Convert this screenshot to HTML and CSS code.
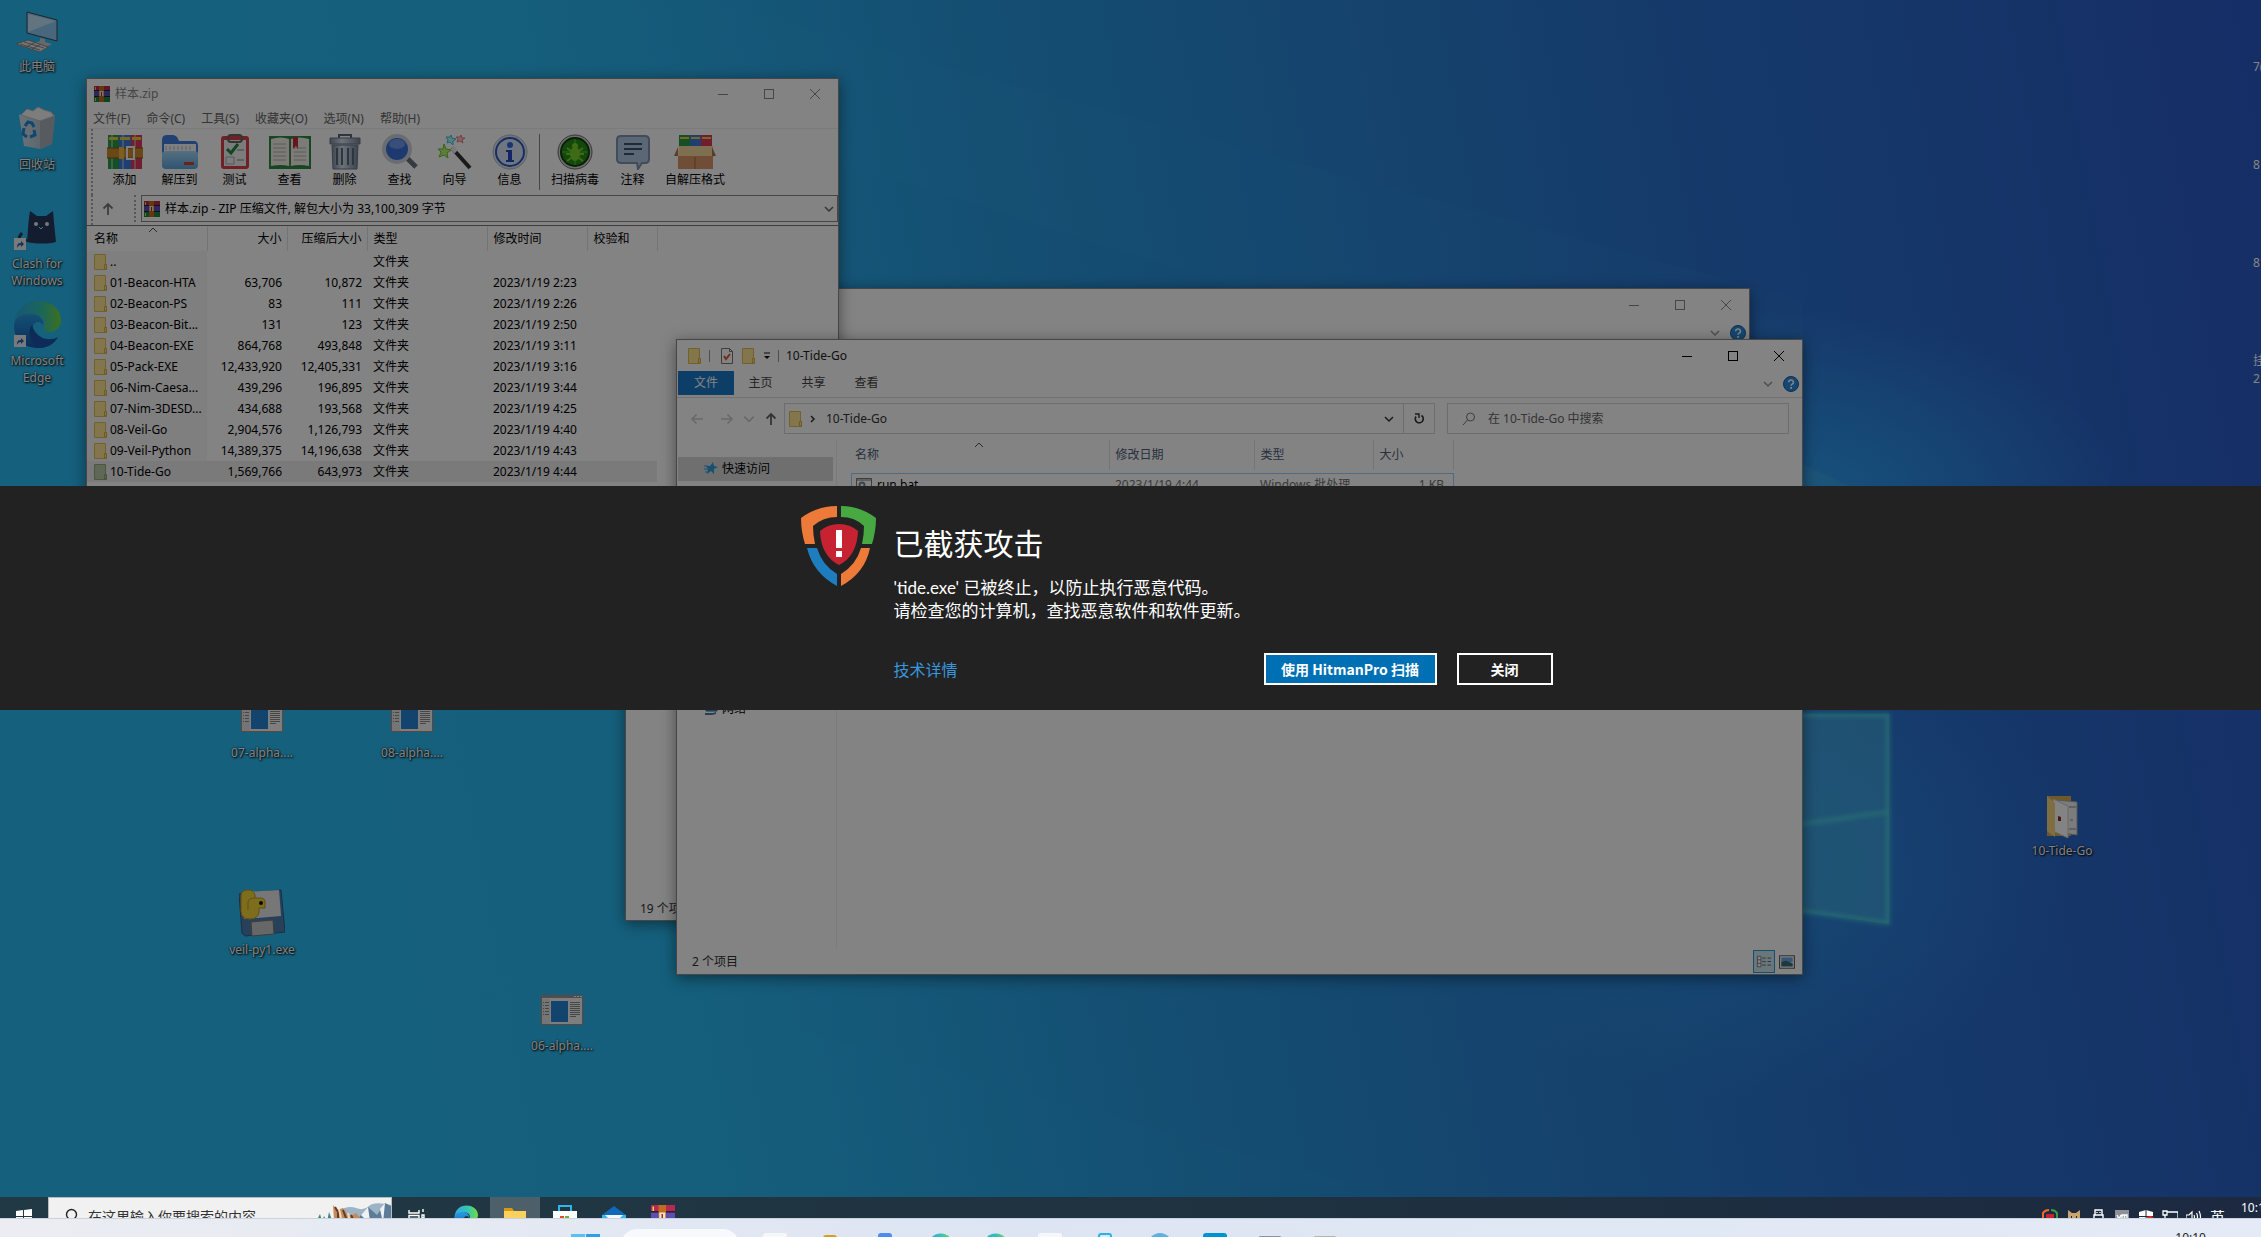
FILE: index.html
```html
<!DOCTYPE html>
<html lang="zh-CN">
<head>
    <meta charset="UTF-8">
    <meta name="viewport" content="width=device-width, initial-scale=1.0">
    <title>HitmanPro.Alert</title>
    <link rel="stylesheet" href="styles.css">
</head>
<body>

    <!-- Shared icons -->
    <svg class="sprite" aria-hidden="true">
        <symbol id="i-min" viewBox="0 0 12 12"><path d="M1 6.500h10" stroke="currentColor"/></symbol>
        <symbol id="i-max" viewBox="0 0 12 12"><rect x="1.500" y="1.500" width="9" height="9" fill="none" stroke="currentColor"/></symbol>
        <symbol id="i-close" viewBox="0 0 12 12"><path d="M1 1l10 10M11 1L1 11" stroke="currentColor"/></symbol>
        <symbol id="i-chev" viewBox="0 0 12 12"><path d="M2 4l4 4 4-4" fill="none" stroke="currentColor" stroke-width="1.500"/></symbol>
        <symbol id="i-sort" viewBox="0 0 12 6"><path d="M2 5l4-4 4 4" fill="none" stroke="currentColor"/></symbol>
        <symbol id="i-right" viewBox="0 0 12 12"><path d="M4 3l3 3-3 3" fill="none" stroke="currentColor" stroke-width="1.500"/></symbol>
        <symbol id="i-up" viewBox="0 0 14 14"><path d="M7 13V2M2.500 6.500L7 2l4.500 4.500" fill="none" stroke="currentColor" stroke-width="1.800"/></symbol>
        <symbol id="i-left" viewBox="0 0 14 14"><path d="M13 7H2M6.500 2.500L2 7l4.500 4.500" fill="none" stroke="currentColor" stroke-width="1.600"/></symbol>
        <symbol id="i-fwd" viewBox="0 0 14 14"><path d="M1 7h11M7.500 2.500L12 7l-4.500 4.500" fill="none" stroke="currentColor" stroke-width="1.600"/></symbol>
        <symbol id="i-help" viewBox="0 0 16 16">
            <circle cx="8" cy="8" r="7.500" fill="#2a8ade" stroke="#15609f"/>
            <path d="M5.600 6.200a2.400 2.200 0 1 1 3.600 1.900c-.9.5-1.100.8-1.100 1.700" fill="none" stroke="#fff" stroke-width="1.600"/>
            <rect x="7.200" y="11" width="1.800" height="1.800" fill="#fff"/>
        </symbol>
        <symbol id="i-folder" viewBox="0 0 14 16">
            <path d="M.5.500h11v10h1v5H.500z" fill="#ffe694" stroke="#e2bd53"/>
            <path d="M10.500 15v-4.500h2V15z" fill="#ffe694" stroke="#d9b13f"/>
        </symbol>
        <symbol id="i-rar" viewBox="0 0 16 16">
            <path d="M0 0h16v5H0z" fill="#b8294f"/><path d="M0 5h16v6H0z" fill="#5b4fb0"/><path d="M0 11h16v5H0z" fill="#1e8440"/>
            <path d="M0 4.500h16M0 10.500h16" stroke="#2c1c3c"/>
            <path d="M5 0h5v16H5z" fill="#c46b1f"/><path d="M5.500 5h4v5h-4z" fill="#f0e4d0"/><path d="M7 6h1v4H7z" fill="#a02c20"/>
            <path d="M1.500 1v3M1.500 12v3" stroke="#e8d25a"/>
        </symbol>
        <symbol id="i-app" viewBox="0 0 42 30">
            <path d="M.5.500h41v29H.500z" fill="#f6f6f6" stroke="#b38a7c"/>
            <path d="M1 1h40v2H1z" fill="#999"/><path d="M33 1h2v1h-2zM36 1h2v1h-2zM39 1h2v1h-2z" fill="#fff"/>
            <path d="M1 4h8v25H1z" fill="#e4e4e4"/>
            <path d="M10 6h17v21H10z" fill="#2585d4"/>
            <path d="M2 7.500h1M4 7.500h4M2 10.500h1M4 10.500h4M2 13.500h1M4 13.500h4M2 16.500h1M4 16.500h4M2 19.500h1M4 19.500h4M29 7.500h10M29 9.500h10M29 11.500h10M29 13.500h10M29 15.500h10M29 17.500h10M29 19.500h10M29 21.500h6" stroke="#888"/>
        </symbol>
        <symbol id="i-link" viewBox="0 0 12 12">
            <path d="M0 0h12v12H0z" fill="#eee"/><path d="M3 10c0-4 1-5 4-5V3l3 3-3 3V7C5 7 4 8 3 10z" fill="#2b62b8"/>
        </symbol>
        <symbol id="i-edge" viewBox="0 0 48 48">
            <path d="M1 26C1 10 12 1 25 1c14 0 23 9 23 19 0 7-5 12-11 12-5 0-8-2-6-5 2-4 0-12-9-12C12 15 2 20 1 26z" fill="url(#edgeTop)"/>
            <path d="M1 26C1 17 9 14 17 14c10 0 14 6 13 11-2-3-5-4-8-2-4 3-5 13 3 18 6 3 12 2 18-2-4 6-11 9-18 9C11 48 1 39 1 26z" fill="url(#edgeLow)"/>
            <path d="M19 25c-6 8-1 21 9 23 8-1 14-5 17-11-9 5-22 2-26-12z" fill="#1a55a8"/>
        </symbol>
        <linearGradient id="edgeTop"><stop offset="0" stop-color="#2fa8e8"/><stop offset=".55" stop-color="#33c4b6"/><stop offset="1" stop-color="#74dc3e"/></linearGradient>
        <linearGradient id="edgeLow" x2="0" y2="1"><stop offset="0" stop-color="#2a9be0"/><stop offset="1" stop-color="#1558b0"/></linearGradient>
        <linearGradient id="binBody"><stop offset="0" stop-color="#dfe5ea"/><stop offset="1" stop-color="#aab4bd"/></linearGradient>
        <linearGradient id="can"><stop offset="0" stop-color="#7c8ba0"/><stop offset=".4" stop-color="#d5deea"/><stop offset="1" stop-color="#76859b"/></linearGradient>
        <linearGradient id="openFolder" x2="0" y2="1"><stop offset="0" stop-color="#a8d8fa"/><stop offset="1" stop-color="#5ca5dc"/></linearGradient>
    </svg>

    <main class="desktop">
        <!-- Wallpaper light panes -->
        <svg class="wallpaper" viewBox="0 0 2261 1197" preserveAspectRatio="none" aria-hidden="true">
            <defs>
                <radialGradient id="glow"><stop offset="0" stop-color="#2fb4ff" stop-opacity=".75"/><stop offset="1" stop-color="#2fb4ff" stop-opacity="0"/></radialGradient>
                <filter id="soft"><feGaussianBlur stdDeviation="2"/></filter>
            </defs>
            <ellipse cx="1790" cy="500" rx="330" ry="190" fill="url(#glow)"/>
            <ellipse cx="1740" cy="860" rx="330" ry="240" fill="url(#glow)" opacity=".55"/>
            <path d="M0 1040L620 980 1400 1197H0z" fill="#35c8ff" opacity=".05"/>
            <path d="M100 0L900 180 1240 289 1802 340V300L700 0z" fill="#4ccaff" opacity=".05"/>
            <path d="M1700 415l189 90v180h-189z" fill="#4bb6e6" opacity=".3"/>
            <path d="M1700 714h189v210l-189-26z" fill="#4bb6e6" opacity=".6"/>
            <path d="M1700 715h188v208l-188-26M1700 838l188-26" fill="none" stroke="#4fe0e0" stroke-width="4" opacity=".7" filter="url(#soft)"/>
        </svg>

        <div class="shortcut pc">
            <svg width="42" height="42" viewBox="0 0 42 42">
                <path d="M11 1l30 8v21L11 22z" fill="#8fc8f2" stroke="#3c4650"/><path d="M12 3l28 7-28 11z" fill="#bfe2fa"/>
                <path d="M24 27l5 1v3l7 2-6 3-11-4 5-2z" fill="#c7ccd0"/>
                <path d="M0 33l12-4 20 7-8 5z" fill="#e6e6e6" stroke="#888"/><path d="M4 33l20 6M8 31l20 6M10 36l10-5M16 38l9-5" stroke="#888"/>
            </svg>
            <span>此电脑</span>
        </div>
        <div class="shortcut bin">
            <svg width="38" height="44" viewBox="0 0 38 44">
                <path d="M1 9l18-5 18 5-3 29-12 5-16-3z" fill="url(#binBody)" opacity=".92"/><path d="M22 14l15-5-3 29-12 5z" fill="#a9b2ba"/>
                <path d="M3 9l6-6 6 2 5-4 6 3 7 2 3 4-14 5z" fill="#f3f3f3" stroke="#b9c0c6"/>
                <path d="M7 20l3-4 4 1 2 4M16 24l1 5-5 2M9 31l-4-3 1-6" fill="none" stroke="#2389d8" stroke-width="3"/>
            </svg>
            <span>回收站</span>
        </div>
        <div class="shortcut clash">
            <svg width="48" height="44" viewBox="0 0 48 44">
                <path d="M14 35c1-10 1-19 3-31l7 5h9l7-5c1 12 2 22 3 31-8 2-20 2-29 0z" fill="#25395c"/>
                <path d="M14 33c-8 2-10-1-5-7" fill="none" stroke="#25395c" stroke-width="3"/>
                <circle cx="23" cy="17" r="2" fill="#e8eef2"/><circle cx="34" cy="17" r="2" fill="#e8eef2"/><path d="M26 20l2 2 2-2" stroke="#9fb" fill="none"/>
                <use href="#i-link" x="1" y="31" width="12" height="12"/>
            </svg>
            <span>Clash for<br>Windows</span>
        </div>
        <div class="shortcut edge">
            <svg width="48" height="48" viewBox="0 0 48 48"><use href="#i-edge"/><use href="#i-link" x="1" y="35" width="12" height="12"/></svg>
            <span>Microsoft<br>Edge</span>
        </div>
        <div class="shortcut alpha7"><svg width="42" height="30"><use href="#i-app"/></svg><span>07-alpha....</span></div>
        <div class="shortcut alpha8"><svg width="42" height="30"><use href="#i-app"/></svg><span>08-alpha....</span></div>
        <div class="shortcut alpha6"><svg width="42" height="30"><use href="#i-app"/></svg><span>06-alpha....</span></div>
        <div class="shortcut veil">
            <svg width="46" height="48" viewBox="0 0 46 48">
                <path d="M0 5l42-4 4 42-40 4-3-3z" fill="#4f7fb0" stroke="#355a86"/><path d="M5 3l35-2 2 26-37 3z" fill="#e8e8e8"/>
                <path d="M12 33l22-2 1 14-22 2z" fill="#c9c9c9" stroke="#777"/>
                <path d="M2 7Q2 1 9 1q6 0 7 5v3h5q5 0 5 4v6h-6v4q-1 7-9 7-9 0-9-8z" fill="#f3d63c" stroke="#c99518"/><path d="M9 21v-8q1-4 7-4" fill="none" stroke="#c99518"/><circle cx="22" cy="14" r="2" fill="#111"/>
            </svg>
            <span>veil-py1.exe</span>
        </div>
        <div class="shortcut tide">
            <svg width="32" height="42" viewBox="0 0 32 42">
                <path d="M1 0h24v40H1z" fill="#d9ae50"/><path d="M10 4l21 2v33l-21-3z" fill="#f2f2f2" stroke="#aaa"/><path d="M23 11h7M23 33h7M24 24h3" stroke="#888"/>
                <path d="M7 3l15 7v32L7 35z" fill="#fff" stroke="#ccc"/><path d="M1 0l8 7v34l-8-6z" fill="#f5d681"/><path d="M12 20l3 1v4h-3z" fill="#8c2d2d"/>
            </svg>
            <span>10-Tide-Go</span>
        </div>
        <div class="edge-labels"><span>7(</span><span>8</span><span>8</span><span>挂<br>2</span></div>

        <!-- Background Explorer window -->
        <section class="window window-back">
            <div class="titlebar">
                <div class="controls">
                    <button aria-label="最小化"><svg><use href="#i-min"/></svg></button>
                    <button aria-label="最大化"><svg><use href="#i-max"/></svg></button>
                    <button aria-label="关闭"><svg><use href="#i-close"/></svg></button>
                </div>
            </div>
            <div class="tabs"><div class="help"><svg class="chev"><use href="#i-chev"/></svg><svg class="q"><use href="#i-help"/></svg></div></div>
            <div class="statusbar">19 个项目</div>
        </section>

        <!-- WinRAR -->
        <section class="window window-rar">
            <div class="titlebar">
                <svg class="app-icon"><use href="#i-rar"/></svg>
                <span class="caption">样本.zip</span>
                <div class="controls">
                    <button aria-label="最小化"><svg><use href="#i-min"/></svg></button>
                    <button aria-label="最大化"><svg><use href="#i-max"/></svg></button>
                    <button aria-label="关闭"><svg><use href="#i-close"/></svg></button>
                </div>
            </div>
            <nav class="menu">
                <button>文件(F)</button><button>命令(C)</button><button>工具(S)</button><button>收藏夹(O)</button><button>选项(N)</button><button>帮助(H)</button>
            </nav>
            <div class="toolbar">
                <button>
                    <svg viewBox="0 0 36 36"><path d="M1 1h11v34H1z" fill="#2a9a48"/><path d="M12 1h12v34H12z" fill="#3d7be0"/><path d="M24 1h11v34H24z" fill="#d83a5c"/><path d="M5 1v34M16 1v34M28 1v34" stroke="#fff" opacity=".35" stroke-width="2"/><path d="M2 3h9v3H2zM13 3h10v3H13zM25 3h9v3h-9z" fill="#eccb3a"/><path d="M0 14h36v10H0z" fill="#cf8a2c"/><path d="M0 14h36M0 24h36" stroke="#8a5314"/><path d="M20 13h7v12h-7z" fill="none" stroke="#f5f5f5" stroke-width="2"/><path d="M12 13h5v12h-5z" fill="#f0b83f"/></svg>
                    <span>添加</span>
                </button>
                <button>
                    <svg viewBox="0 0 36 36"><path d="M0 6q0-5 5-5h6q4 0 6 6h15q4 0 4 5v18H0z" fill="#3f7fdc"/><path d="M2 10h32v10H2z" fill="#f5f7fa"/><path d="M4 12v4M8 12v4M12 12v4M16 12v4M20 12v4M24 12v4M28 12v4" stroke="#b3bcc8"/><path d="M0 20q0-3 4-3h28q4 0 4 3v11q0 4-4 4H4q-4 0-4-4z" fill="url(#openFolder)"/><path d="M22 28h10v3H22z" fill="#d9402b"/></svg>
                    <span>解压到</span>
                </button>
                <button>
                    <svg viewBox="0 0 36 36"><rect x="4" y="2" width="28" height="33" rx="3" fill="#d8404a"/><path d="M7 6h22v26H7z" fill="#f2f2f2"/><rect x="11" y="1" width="14" height="7" rx="3" fill="none" stroke="#666" stroke-width="2"/><path d="M10 15l4 4 7-9" fill="none" stroke="#1f8a3c" stroke-width="3"/><path d="M9 23h8v7H9z" fill="none" stroke="#aaa"/><path d="M20 16h7M20 26h7" stroke="#bbb" stroke-width="2"/></svg>
                    <span>测试</span>
                </button>
                <button>
                    <svg class="wide" viewBox="0 0 42 36"><path d="M0 2h42v33H0z" fill="#2d8a42"/><path d="M2 5q10-3 18 0v27q-8-2-18 0zM22 5q8-3 18 0v27q-10-2-18 0z" fill="#f3f0e8"/><path d="M4 10h13M4 14h13M4 18h13M4 22h13M4 26h13M25 14h12M25 18h12M25 22h12M25 26h12" stroke="#b5b0a6"/><path d="M24 3h5v12l-2-3-3 3z" fill="#c42e3a"/><path d="M21 5v28" stroke="#777"/></svg>
                    <span>查看</span>
                </button>
                <button>
                    <svg viewBox="0 0 36 36"><path d="M12 4V1h12v3" fill="none" stroke="#5c6878" stroke-width="2"/><path d="M3 4h30v6H3z" fill="url(#can)" stroke="#68778a"/><path d="M5 11h26l-1 24H6z" fill="url(#can)" stroke="#68778a"/><path d="M10 14v17M15 14v17M21 14v17M26 14v17" stroke="#59687c" stroke-width="2"/></svg>
                    <span>删除</span>
                </button>
                <button>
                    <svg viewBox="0 0 36 36"><path d="M24 23l10 10" stroke="#68717d" stroke-width="5"/><circle cx="15" cy="15" r="13" fill="#3b6fd8" stroke="#ccd3dc" stroke-width="4"/><ellipse cx="15" cy="10" rx="8" ry="5" fill="#6f9bec"/></svg>
                    <span>查找</span>
                </button>
                <button>
                    <svg viewBox="0 0 36 36"><path d="M15 14l18 20" stroke="#333" stroke-width="4"/><path d="M15 14l4 4" stroke="#eee" stroke-width="4"/><path d="M7 10l2 5 5 1-4 3 1 5-4-3-5 2 2-5-3-3h5z" fill="#b8f27c" stroke="#65c825"/><path d="M14 1l1 3 4 1-3 2v4l-3-3-3 1 1-3-2-3h4z" fill="#adf2fa" stroke="#3cc4dc"/><path d="M24 1l1 3h3l-3 2 1 3-3-2-3 1 1-3-2-2h4z" fill="#f8c0c6" stroke="#ea7c88"/></svg>
                    <span>向导</span>
                </button>
                <button>
                    <svg viewBox="0 0 36 36"><circle cx="18" cy="18" r="17" fill="#dfe6f0" stroke="#aeb9c6"/><circle cx="18" cy="18" r="14" fill="#dbe6f8" stroke="#2b5bbd" stroke-width="2"/><circle cx="18" cy="11" r="3" fill="#3366dd"/><path d="M14 16h6v10h2v2h-8v-2h2v-8h-2z" fill="#2546c8"/></svg>
                    <span>信息</span>
                </button>
                <i class="rule"></i>
                <button class="w70">
                    <svg viewBox="0 0 36 36"><circle cx="18" cy="18" r="17" fill="#d6d6d6" stroke="#666"/><circle cx="18" cy="18" r="14" fill="#258d17" stroke="#123f0c" stroke-width="2"/><path d="M18 5v26M5 18h26" stroke="#58c93c"/><ellipse cx="18" cy="20" rx="5" ry="7" fill="#7cd02e"/><circle cx="18" cy="12" r="3" fill="#7cd02e"/><path d="M10 14l4 3M9 20h4M10 27l4-3M26 14l-4 3M27 20h-4M26 27l-4-3" stroke="#7cd02e" stroke-width="2"/></svg>
                    <span>扫描病毒</span>
                </button>
                <button class="w45">
                    <svg viewBox="0 0 36 36"><path d="M6 2h24q4 0 4 4v19q0 4-4 4h-3l-4 6-1-6H6q-4 0-4-4V6q0-4 4-4z" fill="#b4c8e4" stroke="#7f93b0" stroke-width="2"/><path d="M9 10h18M9 15h18M9 20h10" stroke="#3d5270" stroke-width="2"/></svg>
                    <span>注释</span>
                </button>
                <button class="w80">
                    <svg class="wide" viewBox="0 0 42 36"><path d="M5 1h11v13H5z" fill="#2a9a48"/><path d="M16 1h11v13H16z" fill="#3d7be0"/><path d="M27 1h11v13H27z" fill="#d83a5c"/><path d="M6 3h9v2H6zM17 3h9v2h-9zM28 3h9v2h-9z" fill="#eccb3a"/><path d="M5 12h34l1 11H4z" fill="#f4d99a"/><path d="M4 13l-4 9h4zM38 13l4 9h-4z" fill="#b8734a"/><path d="M4 22h35v13H4z" fill="#d9976b"/><path d="M21 23v12" stroke="#a5663e"/></svg>
                    <span>自解压格式</span>
                </button>
            </div>
            <div class="pathbar">
                <button class="up" aria-label="上一级"><svg><use href="#i-up"/></svg></button>
                <div class="combo">
                    <svg class="app-icon"><use href="#i-rar"/></svg>
                    <select aria-label="路径"><option>样本.zip - ZIP 压缩文件, 解包大小为 33,100,309 字节</option></select>
                    <svg class="chev"><use href="#i-chev"/></svg>
                </div>
            </div>
            <div class="list">
                <table class="archive">
                    <thead>
                        <tr><th class="c-name">名称<svg class="sort"><use href="#i-sort"/></svg></th><th class="c-size num">大小</th><th class="c-size num">压缩后大小</th><th class="c-type">类型</th><th class="c-date">修改时间</th><th class="c-sum">校验和</th></tr>
                    </thead>
                    <tbody>
                        <tr><td><svg><use href="#i-folder"/></svg>..</td><td></td><td></td><td>文件夹</td><td></td><td></td></tr>
                        <tr><td><svg><use href="#i-folder"/></svg>01-Beacon-HTA</td><td>63,706</td><td>10,872</td><td>文件夹</td><td>2023/1/19 2:23</td><td></td></tr>
                        <tr><td><svg><use href="#i-folder"/></svg>02-Beacon-PS</td><td>83</td><td>111</td><td>文件夹</td><td>2023/1/19 2:26</td><td></td></tr>
                        <tr><td><svg><use href="#i-folder"/></svg>03-Beacon-Bit...</td><td>131</td><td>123</td><td>文件夹</td><td>2023/1/19 2:50</td><td></td></tr>
                        <tr><td><svg><use href="#i-folder"/></svg>04-Beacon-EXE</td><td>864,768</td><td>493,848</td><td>文件夹</td><td>2023/1/19 3:11</td><td></td></tr>
                        <tr><td><svg><use href="#i-folder"/></svg>05-Pack-EXE</td><td>12,433,920</td><td>12,405,331</td><td>文件夹</td><td>2023/1/19 3:16</td><td></td></tr>
                        <tr><td><svg><use href="#i-folder"/></svg>06-Nim-Caesa...</td><td>439,296</td><td>196,895</td><td>文件夹</td><td>2023/1/19 3:44</td><td></td></tr>
                        <tr><td><svg><use href="#i-folder"/></svg>07-Nim-3DESD...</td><td>434,688</td><td>193,568</td><td>文件夹</td><td>2023/1/19 4:25</td><td></td></tr>
                        <tr><td><svg><use href="#i-folder"/></svg>08-Veil-Go</td><td>2,904,576</td><td>1,126,793</td><td>文件夹</td><td>2023/1/19 4:40</td><td></td></tr>
                        <tr><td><svg><use href="#i-folder"/></svg>09-Veil-Python</td><td>14,389,375</td><td>14,196,638</td><td>文件夹</td><td>2023/1/19 4:43</td><td></td></tr>
                        <tr class="selected"><td><svg><use href="#i-folder"/></svg>10-Tide-Go</td><td>1,569,766</td><td>643,973</td><td>文件夹</td><td>2023/1/19 4:44</td><td></td></tr>
                    </tbody>
                </table>
            </div>
        </section>

        <!-- Active Explorer window -->
        <section class="window window-front">
            <div class="titlebar">
                <svg class="folder"><use href="#i-folder"/></svg>
                <i class="tick"></i>
                <svg class="doc" viewBox="0 0 12 16"><path d="M.5.500h8l3 3v12H.500z" fill="#fff" stroke="#777"/><path d="M8.500.500v3h3" fill="none" stroke="#777"/><path d="M3 8l2 3 4-5" fill="none" stroke="#e2562a" stroke-width="2"/></svg>
                <svg class="folder"><use href="#i-folder"/></svg>
                <svg class="more" viewBox="0 0 8 8"><path d="M1 1h6" stroke="#111"/><path d="M1 4h6L4 7z" fill="#111"/></svg>
                <i class="tick"></i>
                <span class="caption">10-Tide-Go</span>
                <div class="controls">
                    <button aria-label="最小化"><svg><use href="#i-min"/></svg></button>
                    <button aria-label="最大化"><svg><use href="#i-max"/></svg></button>
                    <button aria-label="关闭"><svg><use href="#i-close"/></svg></button>
                </div>
            </div>
            <div class="tabs">
                <button class="active">文件</button><button>主页</button><button>共享</button><button>查看</button>
                <div class="help"><svg class="chev"><use href="#i-chev"/></svg><svg class="q"><use href="#i-help"/></svg></div>
            </div>
            <div class="navbar">
                <div class="arrows">
                    <button aria-label="后退" disabled><svg><use href="#i-left"/></svg></button>
                    <button aria-label="前进" disabled><svg><use href="#i-fwd"/></svg></button>
                    <button class="recent" aria-label="最近" disabled><svg><use href="#i-chev"/></svg></button>
                    <button aria-label="向上"><svg><use href="#i-up"/></svg></button>
                </div>
                <div class="address">
                    <svg class="folder"><use href="#i-folder"/></svg>
                    <svg class="crumb"><use href="#i-right"/></svg>
                    <input type="text" value="10-Tide-Go" aria-label="地址">
                    <svg class="chev"><use href="#i-chev"/></svg>
                    <button aria-label="刷新"><svg viewBox="0 0 12 12"><path d="M8.500 2.500A4 4 0 1 1 3 3.500" fill="none" stroke="currentColor" stroke-width="1.600"/><path d="M2 1h4v4" fill="none" stroke="currentColor" stroke-width="1.400"/></svg></button>
                </div>
                <label class="search">
                    <svg viewBox="0 0 14 14"><circle cx="8.500" cy="5" r="4" fill="none" stroke="#777"/><path d="M5.500 8L1 13" stroke="#777"/></svg>
                    <input type="text" placeholder="在 10-Tide-Go 中搜索" aria-label="搜索">
                </label>
            </div>
            <div class="content">
                <aside>
                    <a class="quick" href="#"><svg viewBox="0 0 14 14"><path d="M9 0l1 4 4 1-4 2v5L7 9l-4 3 1-5-2-3 4 0z" fill="#2f9de0"/><path d="M0 4h4M0 7h4M1 10h3" stroke="#2f9de0"/></svg>快速访问</a>
                    <a class="network" href="#"><svg viewBox="0 0 14 14"><path d="M2 1h11v8H2z" fill="#4aa3e0" stroke="#26679c"/><path d="M1 11h8l3-1v2l-4 1H1z" fill="#4d7d9c"/></svg>网络</a>
                </aside>
                <div class="files">
                    <table>
                        <thead>
                            <tr><th class="f-name">名称<svg class="sort"><use href="#i-sort"/></svg></th><th class="f-date">修改日期</th><th class="f-type">类型</th><th class="f-size">大小</th></tr>
                        </thead>
                        <tbody>
                            <tr><td><svg viewBox="0 0 16 16"><path d="M.5 1.500h15v14H.500z" fill="#fff" stroke="#777"/><path d="M1 3h14" stroke="#777"/><circle cx="6" cy="8" r="2.500" fill="none" stroke="#6c8493" stroke-width="2"/><circle cx="10" cy="12" r="2" fill="none" stroke="#6c8493" stroke-width="2"/></svg>run.bat</td><td>2023/1/19 4:44</td><td>Windows 批处理...</td><td class="num">1 KB</td></tr>
                        </tbody>
                    </table>
                </div>
            </div>
            <div class="statusbar">
                <span>2 个项目</span>
                <div class="views">
                    <button class="on" aria-label="详细信息"><svg viewBox="0 0 18 16"><path d="M1.500 1.500h4v12h-4zM1.500 5.500h4M1.500 9.500h4" fill="#fff" stroke="#777"/><path d="M7 3.500h4M13 3.500h4M7 7.500h4M13 7.500h4M7 11.500h4M13 11.500h4" stroke="#555"/></svg></button>
                    <button aria-label="大图标"><svg viewBox="0 0 14 12"><path d="M.5.500h13v11H.500z" fill="#fff" stroke="#666"/><path d="M2 2h10v4H2z" fill="#6ea7ea"/><path d="M2 6l4-1 6 2v3H2z" fill="#3c6f78"/></svg></button>
                </div>
            </div>
        </section>

        <div class="shade"></div>

        <!-- Alert banner -->
        <section class="alert" role="alertdialog" aria-labelledby="alert-title">
            <div class="alert-inner">
                <svg class="shield" viewBox="0 0 75 80">
                    <path d="M36 0v11Q22 11 12 20q0 9 2 18H4Q0 25 0 12 16 0 36 0z" fill="#ee7a3a"/>
                    <path d="M40 0v11q14 0 23 9 0 9-2 18h10q4-13 4-26Q59 0 40 0z" fill="#48a942"/>
                    <path d="M6 42h10q5 17 20 26v12Q12 67 6 42z" fill="#1d7dbf"/>
                    <path d="M69 42H60q-5 17-20 26v12q24-13 29-38z" fill="#ee7a3a"/>
                    <path d="M38 18q11 0 19 7-1 25-19 34-18-9-19-34 8-7 19-7z" fill="#c62232"/>
                    <path d="M35 24h6v18h-6zM35 45h6v6h-6z" fill="#fff"/>
                </svg>
                <div class="alert-body">
                    <h1 id="alert-title">已截获攻击</h1>
                    <p>'tide.exe' 已被终止，以防止执行恶意代码。<br>请检查您的计算机，查找恶意软件和软件更新。</p>
                    <div class="actions">
                        <a href="#">技术详情</a>
                        <button class="primary">使用 HitmanPro 扫描</button>
                        <button>关闭</button>
                    </div>
                </div>
            </div>
        </section>
    </main>

    <!-- Guest taskbar -->
    <footer class="taskbar">
        <div class="taskbar-row">
            <button class="start" aria-label="开始"><svg width="16" height="16" viewBox="0 0 16 16"><path d="M0 2l7-1v6H0zM8 1l8-1v7H8zM0 8h7v6l-7-1zM8 8h8v8l-8-1z" fill="#fff"/></svg></button>
            <label class="task-search">
                <svg width="14" height="18" viewBox="0 0 14 18"><circle cx="7.500" cy="6.500" r="5" fill="none" stroke="#222" stroke-width="1.400"/><path d="M4 11l-3 5" stroke="#222" stroke-width="1.400"/></svg>
                <input type="text" placeholder="在这里输入你要搜索的内容" aria-label="搜索">
                <svg class="art" width="73" height="32" viewBox="0 0 73 32">
                    <path d="M20 10q10-6 18-3t13-2 22-1v28H20z" fill="#9db4c6"/><path d="M36 22l14-16 9 8 8-12 6 3v27H36z" fill="#5d7c98"/><path d="M43 14l7-8 2 14-5-2zM62 8l5-6-2 20z" fill="#eef2f5"/>
                    <path d="M0 17l2-4 2 7 2-5 3 6 2-10 3 8v13H0z" fill="#3e8479"/><path d="M15 4l4 5 6-2 6 9 7-4 5 6v14H17z" fill="#c48a5c"/><path d="M17 6l3 5v21M25 9l3 8v15M33 14l3 6v12" stroke="#633c27" stroke-width="2" fill="none"/><path d="M21 8l2 9M30 12l2 9" stroke="#f0d5b7" stroke-width="2"/>
                </svg>
            </label>
            <button class="app" aria-label="任务视图"><svg width="18" height="18" viewBox="0 0 18 18"><path d="M1 2v3h10V2M1 16v-3h10v3M1 7.500h10v3H1zM15 1v3M15 12v4M14 7h2v3h-2z" fill="none" stroke="#fff" stroke-width="1.400"/></svg></button>
            <button class="app" aria-label="Edge"><svg width="24" height="24"><use href="#i-edge"/></svg></button>
            <button class="app open" aria-label="文件资源管理器"><svg width="22" height="18" viewBox="0 0 22 18"><path d="M0 0h8l2 3H0z" fill="#d69a12"/><path d="M0 3h22v15H0z" fill="#fbd05c"/><path d="M4 12h14v6H4z" fill="#e7aa2b"/></svg></button>
            <button class="app" aria-label="应用商店"><svg width="24" height="24" viewBox="0 0 24 24"><path d="M6 8V1h12v7" fill="none" stroke="#2ab7ee" stroke-width="2"/><path d="M0 6h24v16H0z" fill="#fff"/><path d="M7 11h4v4H7z" fill="#e34b2f"/><path d="M12 11h4v4h-4z" fill="#6fb52c"/><path d="M7 16h4v4H7z" fill="#2a9fe8"/><path d="M12 16h4v4h-4z" fill="#f8ba2a"/></svg></button>
            <button class="app" aria-label="邮件"><svg width="24" height="24" viewBox="0 0 24 24"><path d="M0 10l12-9 12 9v12H0z" fill="#0f69b8"/><path d="M0 10h24v12H0z" fill="#34b5ee"/><path d="M3 10h18l-9 9z" fill="#f4f8fb"/></svg></button>
            <button class="app" aria-label="WinRAR"><svg width="24" height="24"><use href="#i-rar"/></svg></button>

            <div class="tray">
                <svg viewBox="0 0 16 16"><path d="M7 1Q3 1 1 4v5" fill="none" stroke="#ee6a2a" stroke-width="2"/><path d="M9 1q4 0 6 3v5" fill="none" stroke="#3a9d3c" stroke-width="2"/><path d="M4 5h8v5q-1 3-4 5-3-2-4-5z" fill="#c62232"/></svg>
                <svg viewBox="0 0 16 16"><path d="M2 1l4 3h4l4-3v14H2z" fill="#c9a571"/><path d="M5 7h1v2H5zM10 7h1v2h-1z" fill="#222"/></svg>
                <svg viewBox="0 0 16 16"><path d="M5 1h7v5H5zM4 6h9v9H4zM7 3v1M10 3v1" fill="none" stroke="#fff" stroke-width="1.400"/></svg>
                <svg viewBox="0 0 16 16"><path d="M1 1h14v14H1z" fill="#8d9298"/><path d="M3 6l2 4 2-4M8 10V6h5v4M10.500 6v4" fill="none" stroke="#fff" stroke-width="1.400"/></svg>
                <svg viewBox="0 0 16 16"><path d="M8 1l7 2v5q-1 4-7 7-6-3-7-7V3z" fill="#fff"/><path d="M8 1v14M1 7.500h14" stroke="#1d2b3f"/><circle cx="12" cy="11" r="4" fill="#d82b2b"/></svg>
                <svg viewBox="0 0 16 16"><path d="M1 2h4v4H1zM5 3h11v8H5M3 6v6h6" fill="none" stroke="#fff" stroke-width="1.300"/></svg>
                <svg viewBox="0 0 16 16"><path d="M0 6h3l3-3v10l-3-3H0zM8 6q1 2 0 4M10.500 4q2 4 0 8M13 2q3 6 0 12" fill="none" stroke="#fff" stroke-width="1.200"/></svg>
                <span class="ime">英</span>
                <span class="clock">10:1</span>
            </div>
        </div>
    </footer>

    <!-- Host taskbar -->
    <footer class="hostbar">
        <div class="host-row">
            <span class="h-start"></span>
            <span class="h-search"></span>
            <span class="h-icons">
                <i class="white"></i><i class="gold"></i><i class="blue"></i>
                <svg><use href="#i-edge"/></svg><svg><use href="#i-edge"/></svg>
                <i class="white"></i><i class="store"></i><i class="round"></i><i class="azure"></i><i class="grey"></i><i class="sand"></i>
            </span>
            <span class="h-clock">10:10</span>
        </div>
    </footer>

</body>
</html>
```
FILE: styles.css
```css
* {
    box-sizing: border-box;
}

body {
    margin: 0;
    height: 100vh;
    display: flex;
    flex-direction: column;
    overflow: hidden;
    font-family: "Noto Sans", "Noto Sans CJK SC", sans-serif;
    font-size: 12px;
    line-height: 16px;
    color: #222;
}

button,
input,
select {
    font: inherit;
    color: inherit;
    background: none;
    border: 0;
    padding: 0;
    margin: 0;
    outline: 0;
}

svg {
    display: block;
    flex: none;
}

a {
    color: inherit;
    text-decoration: none;
}

.sprite {
    position: absolute;
    width: 0;
    height: 0;
}

/* Desktop */
.desktop {
    position: relative;
    flex: 1;
    overflow: hidden;
    background: linear-gradient(80deg, #29bcf4 0%, #29baf2 28%, #2896dc 50%, #2a74d0 74%, #2b5ac8 100%);
}

.wallpaper {
    position: absolute;
    width: 100%;
    height: 100%;
}

.shade {
    position: absolute;
    inset: 0;
    background: rgba(0, 0, 0, 0.486);
}

.shortcut {
    position: absolute;
    width: 72px;
    display: flex;
    flex-direction: column;
    align-items: center;
    gap: 8px;
    color: #fff;
    text-align: center;
    line-height: 17px;
    white-space: nowrap;
    text-shadow: 1px 1px 2px #000, 0 0 2px #000;
}

.pc { left: 1px; top: 11px; gap: 5px; }
.bin { left: 1px; top: 106px; gap: 6px; }
.clash { left: 1px; top: 207px; gap: 4px; }
.edge { left: 1px; top: 300px; gap: 4px; }
.alpha7 { left: 226px; top: 702px; gap: 12px; }
.alpha8 { left: 376px; top: 702px; gap: 12px; }
.alpha6 { left: 526px; top: 995px; gap: 12px; }
.veil { left: 226px; top: 889px; gap: 4px; }
.tide { left: 2026px; top: 796px; gap: 4px; }

.edge-labels {
    position: absolute;
    right: -4px;
    top: 58px;
    display: grid;
    grid-auto-rows: 98px;
    width: 12px;
    color: #fff;
    line-height: 18px;
    white-space: nowrap;
}

/* Windows */
.window {
    position: absolute;
    display: flex;
    flex-direction: column;
    background: #fff;
    border: 1px solid #888;
    box-shadow: 0 3px 14px rgba(0, 0, 0, 0.45);
}

.window-back {
    left: 625px;
    top: 288px;
    width: 1125px;
    height: 633px;
    color: #888;
}

.window-rar {
    left: 86px;
    top: 78px;
    width: 753px;
    height: 560px;
}

.window-front {
    left: 676px;
    top: 339px;
    width: 1127px;
    height: 636px;
}

.titlebar {
    display: flex;
    align-items: center;
    height: 31px;
    padding-left: 7px;
}

.controls {
    display: flex;
    margin-left: auto;
    color: #000;
}

.controls button {
    width: 46px;
    height: 28px;
    display: grid;
    place-items: center;
}

.controls svg,
.chev,
.crumb {
    width: 12px;
    height: 12px;
}

.window-back .controls,
.window-rar .controls {
    color: #888;
}

.app-icon {
    width: 16px;
    height: 16px;
}

.folder {
    width: 14px;
    height: 16px;
}

.window-rar .titlebar {
    height: 30px;
}

.window-rar .caption {
    margin-left: 5px;
    color: #888;
}

/* WinRAR */
.menu {
    display: flex;
    gap: 16px;
    height: 20px;
    padding-left: 6px;
    color: #666;
    border-bottom: 1px solid #f0f0f0;
}

.toolbar {
    display: flex;
    height: 66px;
    margin-left: 4px;
    padding: 5px 0 0 4px;
    border-left: 2px dotted #aaa;
}

.toolbar button {
    width: 55px;
    display: flex;
    flex-direction: column;
    align-items: center;
    gap: 2px;
    color: #000;
}

.toolbar svg {
    width: 36px;
    height: 36px;
}

.toolbar svg.wide {
    width: 42px;
}

.rule {
    width: 1px;
    height: 56px;
    margin-left: 2px;
    background: #888;
}

.toolbar .w70 { width: 70px; }
.toolbar .w45 { width: 45px; }
.toolbar .w80 { width: 80px; }

.pathbar {
    display: flex;
    height: 30px;
    margin-left: 4px;
    padding-bottom: 3px;
    border-left: 2px dotted #aaa;
    color: #000;
}

.up {
    width: 43px;
    padding-left: 8px;
    border-right: 2px dotted #aaa;
    color: #777;
}

.up svg {
    width: 14px;
    height: 14px;
}

.combo {
    flex: 1;
    display: flex;
    align-items: center;
    gap: 5px;
    margin-left: 5px;
    padding: 0 2px;
    border: 1px solid #888;
}

.combo select {
    flex: 1;
    appearance: none;
}

.combo .chev {
    color: #666;
}

.list {
    flex: 1;
    border-top: 1px solid #777;
    color: #000;
}

table {
    border-collapse: collapse;
    table-layout: fixed;
}

th {
    position: relative;
    font-weight: normal;
    text-align: left;
}

.sort {
    position: absolute;
    left: 50%;
    top: 1px;
    width: 12px;
    height: 6px;
    color: #555;
}

.archive {
    width: 570px;
}

.archive th {
    height: 25px;
    padding: 0 5px 0 6px;
    border-right: 1px solid #e2e2e2;
}

.archive td {
    height: 21px;
    padding: 0 5px 0 6px;
    white-space: nowrap;
}

.archive th:first-child,
.archive td:first-child {
    padding-left: 7px;
}

.archive td:first-child {
    display: flex;
    align-items: center;
    gap: 2px;
    background: #f7f7f7;
    padding-right: 0;
}

.archive td svg {
    width: 14px;
    height: 16px;
}

.archive td:nth-child(2),
.archive td:nth-child(3),
.num,
.archive th.num {
    text-align: right;
}

.c-name { width: 120px; }
.c-size { width: 80px; }
.c-type { width: 120px; }
.c-date { width: 100px; }
.c-sum { width: 70px; }

.archive .selected,
.archive .selected td:first-child {
    background: #eee;
}

.selected svg {
    filter: hue-rotate(35deg) saturate(0.4) brightness(0.85);
}

/* Explorer */
.window-front .titlebar {
    padding-left: 11px;
    gap: 7px;
}

.tick {
    width: 1px;
    height: 12px;
    background: #999;
}

.doc {
    width: 12px;
    height: 16px;
    margin-left: 4px;
    margin-right: 2px;
}

.more {
    width: 8px;
    height: 8px;
}

.tabs {
    display: flex;
    height: 27px;
    border-bottom: 1px solid #dcdcdc;
}

.window-back .tabs {
    border-color: transparent;
}

.tabs button {
    width: 53px;
    height: 24px;
    color: #444;
}

.tabs .active {
    width: 56px;
    margin-left: 1px;
    background: #1979ca;
    color: #fff;
}

.help {
    display: flex;
    align-items: center;
    gap: 9px;
    margin-left: auto;
    padding-right: 3px;
    color: #999;
}

.q {
    width: 16px;
    height: 16px;
}

.navbar {
    display: flex;
    gap: 12px;
    height: 42px;
    padding: 5px 13px 6px 13px;
}

.arrows {
    display: flex;
    align-items: center;
    gap: 16px;
    width: 82px;
    color: #666;
}

.arrows svg {
    width: 14px;
    height: 14px;
}

.arrows :disabled {
    color: #ccc;
}

.arrows .recent {
    margin: 0 -8px;
}

.address,
.search {
    display: flex;
    align-items: center;
    border: 1px solid #d5d5d5;
}

.address {
    flex: 1;
    padding-left: 4px;
    color: #333;
}

.address .crumb {
    margin: 0 7px 0 4px;
}

.address input {
    flex: 1;
    min-width: 0;
}

.address button {
    width: 31px;
    height: 100%;
    margin-left: 8px;
    display: grid;
    place-items: center;
    border-left: 1px solid #d5d5d5;
}

.address button svg {
    width: 12px;
    height: 12px;
}

.search {
    width: 342px;
    padding-left: 14px;
    gap: 12px;
}

.search svg {
    width: 14px;
    height: 14px;
}

.search input {
    flex: 1;
}

.search ::placeholder {
    color: #666;
    opacity: 1;
}

.content {
    flex: 1;
    display: flex;
}

aside {
    display: flex;
    flex-direction: column;
    width: 160px;
    padding: 17px 3px 0 1px;
    border-right: 1px solid #f0f0f0;
    color: #000;
}

aside a {
    display: flex;
    align-items: center;
    gap: 4px;
    height: 24px;
    padding-left: 26px;
}

aside svg {
    width: 14px;
    height: 14px;
}

.quick {
    background: #d9d9d9;
}

.network {
    margin-top: 216px;
}

.files {
    padding-left: 15px;
}

.files table {
    width: 601px;
}

.files th {
    height: 30px;
    padding-left: 6px;
    border-right: 1px solid #e4e4e4;
    color: #4c607a;
}

.files th:first-child {
    padding-left: 3px;
}

.files .sort {
    left: 121px;
    top: 2px;
}

.files tbody::before {
    content: "";
    display: block;
    height: 4px;
}

.files tbody tr {
    outline: 1px solid #99d1ff;
}

.files td {
    height: 22px;
    padding: 0 9px 0 6px;
    white-space: nowrap;
    color: #6d6d6d;
}

.files td:first-child {
    display: flex;
    align-items: center;
    gap: 5px;
    padding-left: 4px;
    color: #000;
}

.files td svg {
    width: 16px;
    height: 16px;
}

.f-name { width: 257px; }
.f-date { width: 145px; }
.f-type { width: 119px; }
.f-size { width: 80px; }

.statusbar {
    display: flex;
    align-items: center;
    height: 25px;
    margin-top: auto;
    padding: 0 7px 0 15px;
    color: #333;
}

.window-back .statusbar {
    height: 22px;
    padding-left: 14px;
}

.views {
    display: flex;
    align-items: center;
    gap: 4px;
    margin-left: auto;
}

.views .on {
    display: grid;
    place-items: center;
    width: 22px;
    height: 23px;
    background: #cce8f4;
    border: 1px solid #2a9bd2;
}

.views svg {
    width: 16px;
    height: 14px;
}

/* Alert banner */
.alert {
    position: absolute;
    left: 0;
    right: 0;
    top: 486px;
    padding: 20px 0 25px;
    background: #222;
    color: #fff;
    font-family: "Noto Sans CJK SC", sans-serif;
}

.alert-inner {
    display: flex;
    gap: 18px;
    max-width: 844px;
    margin: 0 auto;
    padding-left: 92px;
}

.shield {
    width: 75px;
    height: 80px;
}

.alert-body {
    flex: 1;
}

.alert h1 {
    margin: 16px 0 14px;
    font-size: 30px;
    font-weight: normal;
    line-height: 40px;
}

.alert p {
    margin: 0 0 31px;
    font-family: Lato, "Noto Sans CJK SC", sans-serif;
    font-size: 17px;
    line-height: 23px;
}

.actions {
    display: flex;
    align-items: center;
    gap: 20px;
}

.actions a {
    margin-right: auto;
    font-size: 16px;
    color: #3a96dd;
}

.actions button {
    width: 96px;
    height: 32px;
    border: 2px solid #fff;
    font-size: 14px;
    font-weight: bold;
}

.actions .primary {
    width: 173px;
    background: #0070b5;
}

/* Guest taskbar */
.taskbar {
    height: 21px;
    overflow: hidden;
    background: linear-gradient(90deg, #213944, #1f3340 50%, #1c2941);
}

.taskbar-row {
    display: flex;
    height: 40px;
}

.taskbar button {
    display: grid;
    place-items: center;
}

.start {
    width: 48px;
}

.task-search {
    display: flex;
    align-items: center;
    width: 344px;
    padding-left: 15px;
    background: #f1f1f1;
    border: 1px solid #bbb;
}

.task-search input {
    flex: 1;
    min-width: 0;
    margin-left: 10px;
    font-size: 14px;
}

.task-search ::placeholder {
    color: #333;
    opacity: 1;
}

.app {
    width: 49px;
}

.taskbar .open {
    width: 50px;
    background: #4d5f68;
}

.tray {
    display: flex;
    align-items: center;
    gap: 8px;
    margin-left: auto;
    color: #fff;
}

.tray svg {
    width: 16px;
    height: 16px;
}

.ime {
    font-size: 15px;
    width: 16px;
}

.clock {
    align-self: flex-start;
    width: 20px;
    margin-left: 7px;
    padding-top: 3px;
    white-space: nowrap;
}

/* Host taskbar */
.hostbar {
    height: 19px;
    overflow: hidden;
    background: linear-gradient(90deg, #ebedf2, #dde5f3 45%, #e4ebf6);
    border-top: 1px solid #c9d2de;
}

.host-row {
    display: flex;
    height: 48px;
    padding-left: 571px;
}

.h-start {
    width: 29px;
    height: 28px;
    margin-top: 15px;
    background: linear-gradient(90deg, #52c3f2 48%, #dde5f3 48%, #dde5f3 52%, #2aa0e8 52%);
}

.h-search {
    width: 118px;
    height: 32px;
    margin: 10px 0 0 21px;
    border-radius: 16px;
    background: #f6fafd;
}

.h-icons {
    display: flex;
    gap: 31px;
    margin: 14px 0 0 24px;
}

.h-icons i,
.h-icons svg {
    width: 24px;
    height: 24px;
    border-radius: 3px;
}

.h-icons .white { background: #f7f7f9; }
.h-icons .gold { background: #d79d1c; width: 14px; margin: 2px 5px; }
.h-icons .blue { background: #4f8cf0; width: 14px; margin: 0 5px; }
.h-icons .store { border: 2px solid #27b3ea; width: 14px; margin: 0 5px; }
.h-icons .round { background: #5cb1e0; border-radius: 50%; }
.h-icons .azure { background: #0093d3; }
.h-icons .grey { background: #8d939b; margin-top: 3px; }
.h-icons .sand { background: #b7b4a4; margin-top: 3px; }

.h-clock {
    margin: 11px 55px 0 auto;
}
```
